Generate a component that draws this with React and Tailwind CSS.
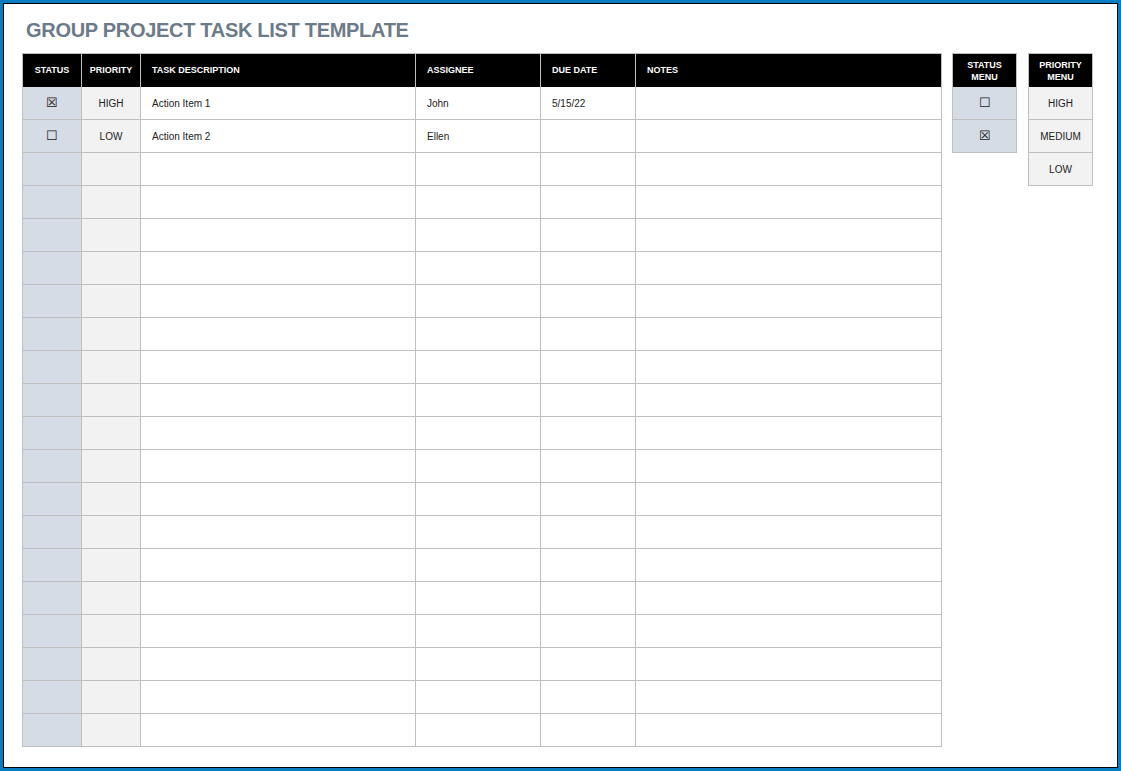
const cols = 'grid-cols-[59px_59px_275px_125px_95px_306px]'

const rows = [
  { status: '☒', priority: 'HIGH', task: 'Action Item 1', who: 'John', due: '5/15/22' },
  { status: '☐', priority: 'LOW', task: 'Action Item 2', who: 'Ellen', due: '' },
  ...Array.from({ length: 18 }, () => ({})),
]

const cell = 'h-[33px] border-r border-b border-[#bfbfbf] flex items-center text-[10px] text-[#222]'
const head = 'h-[33px] border-r border-[#bfbfbf] flex items-center bg-black text-white text-[9px] font-bold'

export default function App() {
  return (
    <div className="w-[1121px] h-[771px] bg-[#0a7cc1] p-[3px]" style={{ fontFamily: '"Liberation Sans", Arial, sans-serif' }}>
      <div className="w-full h-full bg-white border border-black px-[18px] pt-[14px]">
        <h1 className="text-[20px] font-bold text-[#6c7a89] tracking-[-0.3px] leading-[24px] ml-[4px]">GROUP PROJECT TASK LIST TEMPLATE</h1>
        <div className="flex items-start mt-[11px]">
          <div className={`grid ${cols} border-l border-t border-[#bfbfbf]`}>
            <div className={`${head} justify-center`}>STATUS</div>
            <div className={`${head} justify-center`}>PRIORITY</div>
            <div className={`${head} pl-[11px]`}>TASK DESCRIPTION</div>
            <div className={`${head} pl-[11px]`}>ASSIGNEE</div>
            <div className={`${head} pl-[11px]`}>DUE DATE</div>
            <div className={`${head} pl-[11px]`}>NOTES</div>
            {rows.map((r, i) => (
              <div key={i} className="contents">
                <div className={`${cell} justify-center bg-[#d6dce5] text-[13px]`}>{r.status}</div>
                <div className={`${cell} justify-center bg-[#f2f2f2]`}>{r.priority}</div>
                <div className={`${cell} pl-[11px]`}>{r.task}</div>
                <div className={`${cell} pl-[11px]`}>{r.who}</div>
                <div className={`${cell} pl-[11px]`}>{r.due}</div>
                <div className={cell}></div>
              </div>
            ))}
          </div>
          <div className="ml-[10px] w-[65px] border-l border-t border-[#bfbfbf]">
            <div className={`${head} justify-center text-center leading-[12px]`}>STATUS<br />MENU</div>
            <div className={`${cell} justify-center bg-[#d6dce5] text-[13px]`}>☐</div>
            <div className={`${cell} justify-center bg-[#d6dce5] text-[13px]`}>☒</div>
          </div>
          <div className="ml-[11px] w-[65px] border-l border-t border-[#bfbfbf]">
            <div className={`${head} justify-center text-center leading-[12px]`}>PRIORITY<br />MENU</div>
            <div className={`${cell} justify-center bg-[#f2f2f2]`}>HIGH</div>
            <div className={`${cell} justify-center bg-[#f2f2f2]`}>MEDIUM</div>
            <div className={`${cell} justify-center bg-[#f2f2f2]`}>LOW</div>
          </div>
        </div>
      </div>
    </div>
  )
}
